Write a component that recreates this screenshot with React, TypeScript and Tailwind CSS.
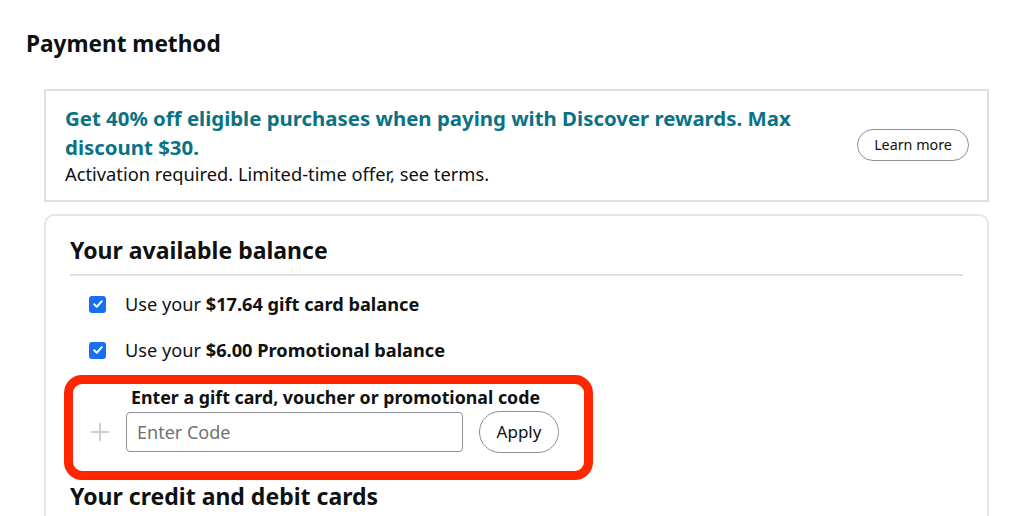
import React from "react";

function Check() {
  return (
    <span className="flex h-[17px] w-[17px] items-center justify-center rounded-[3px] bg-[#1a6ff0]">
      <svg width="12" height="12" viewBox="0 0 12 12" fill="none">
        <path d="M2.2 6.3 4.8 8.8 9.8 3.2" stroke="white" strokeWidth="2" strokeLinecap="round" strokeLinejoin="round" />
      </svg>
    </span>
  );
}

export default function App() {
  return (
    <div className="h-[516px] w-[1024px] overflow-hidden bg-white font-['Noto_Sans',sans-serif] text-[#0f1111]">
      <h1 className="pl-[26px] pt-[29px] text-[22.6px] font-bold leading-[30px]">Payment method</h1>

      {/* promo banner */}
      <div className="ml-[44px] mt-[30px] flex w-[945px] items-center border-2 border-[#e0e0e0] pb-[14px] pl-[19px] pr-[18px] pt-[13px]">
        <div className="flex-1">
          <p className="text-[20.4px] font-bold leading-[29px] text-[#0a7285]">
            Get 40% off eligible purchases when paying with Discover rewards. Max
            <br />
            discount $30.
          </p>
          <p className="text-[18.3px] leading-[24px]">Activation required. Limited-time offer, see terms.</p>
        </div>
        <button className="h-[32px] w-[112px] rounded-full border border-[#8d9096] text-[14.3px]">Learn more</button>
      </div>

      {/* balance card */}
      <div className="ml-[44px] mt-[12px] h-[400px] w-[945px] rounded-[10px] border-2 border-[#e3e6e6] px-[24px] pt-[19px]">
        <h2 className="text-[23px] font-bold leading-[30px]">Your available balance</h2>
        <div className="mt-[9px] h-[2px] bg-[#dfe1e1]" />

        <div className="mt-[16px] flex flex-col gap-[22px] pl-[19px]">
          <label className="flex items-center gap-[19px] text-[18.2px] leading-[24px]">
            <Check />
            <span>
              Use your <b>$17.64 gift card balance</b>
            </span>
          </label>
          <label className="flex items-center gap-[19px] text-[18.2px] leading-[24px]">
            <Check />
            <span>
              Use your <b>$6.00 Promotional balance</b>
            </span>
          </label>
        </div>

        {/* highlighted code entry */}
        <div className="-ml-[6px] mt-[13px] w-[529px] rounded-[18px] border-[9px] border-[#ff2600] pb-[18px] pt-[2px]">
          <p className="pl-[58px] text-[17.8px] font-bold leading-[22px]">Enter a gift card, voucher or promotional code</p>
          <div className="mt-[3px] flex items-center">
            <span className="flex w-[53px] justify-center">
              <svg width="20" height="20" viewBox="0 0 20 20">
                <path d="M10 1v18M1 10h18" stroke="#cfcfcf" strokeWidth="2" />
              </svg>
            </span>
            <input
              placeholder="Enter Code"
              className="h-[40px] w-[337px] rounded-[4px] border border-[#8d9096] px-[10px] text-[18px] placeholder:text-[#6f7373] outline-none"
            />
            <button className="ml-[16px] h-[42px] w-[80px] rounded-full border border-[#8d9096] text-[17px]">Apply</button>
          </div>
        </div>

        <h2 className="mt-[1px] text-[23px] font-bold leading-[30px]">Your credit and debit cards</h2>
      </div>
    </div>
  );
}
